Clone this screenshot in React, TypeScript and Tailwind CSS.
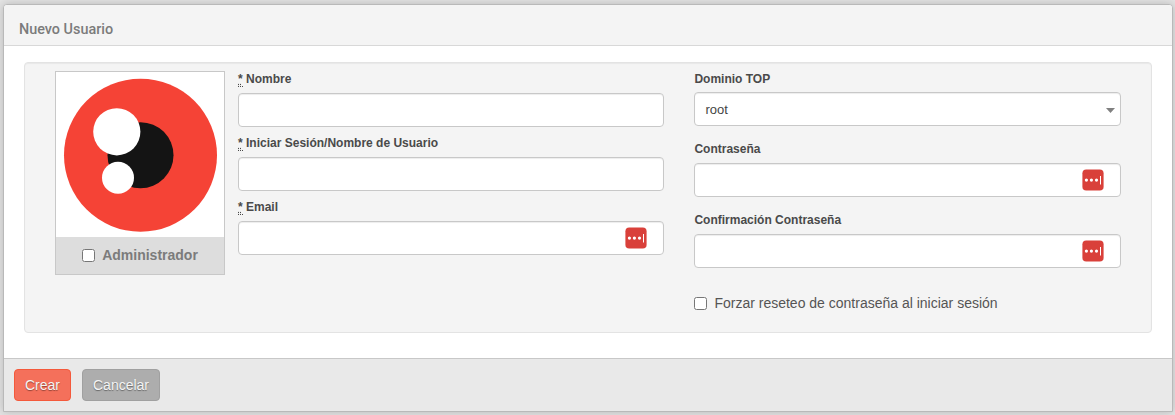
import type { ReactNode } from "react";

const inputClass =
  "block h-[34px] w-full rounded-[4px] border border-[#c8c8c8] bg-white px-2.5 text-[13px] text-[#444] shadow-[inset_0_1px_1px_rgba(0,0,0,0.075)] outline-none";

function PasswordBadge() {
  return (
    <svg className="absolute top-[6px] right-[17px] size-[22px]" viewBox="0 0 22 22" aria-hidden="true">
      <rect x="0.4" y="0.4" width="21.2" height="21.2" rx="3.8" fill="#d9403a" />
      <circle cx="4.4" cy="11.1" r="1.6" fill="#fff" />
      <circle cx="9.4" cy="11.1" r="1.6" fill="#fff" />
      <circle cx="14.5" cy="11.1" r="1.6" fill="#fff" />
      <rect x="18" y="7" width="1" height="8.5" fill="#fff" />
    </svg>
  );
}

function Field({
  label,
  required,
  badge,
  type = "text",
}: {
  label: string;
  required?: boolean;
  badge?: boolean;
  type?: string;
}) {
  return (
    <label className="block">
      <Label required={required}>{label}</Label>
      <span className="relative block">
        <input type={type} className={inputClass} />
        {badge && <PasswordBadge />}
      </span>
    </label>
  );
}

function Label({ required, children }: { required?: boolean; children: ReactNode }) {
  return (
    <span className="block h-[22px] text-[12px] leading-[16px] font-bold text-[#4a4a4a]">
      {required && (
        <>
          <abbr title="required" className="border-b border-dotted border-[#4a4a4a] underline decoration-dotted">*</abbr>{" "}
        </>
      )}
      {children}
    </span>
  );
}

function Checkbox() {
  return <input type="checkbox" className="size-[13px] shrink-0" />;
}

function Avatar() {
  return (
    <div className="h-[204px] w-[170px] shrink-0 border border-[#c8c8c8] bg-white">
      <svg className="block h-[165px] w-[168px]" viewBox="0 0 168 165">
        <circle cx="84.5" cy="83.2" r="76.5" fill="#f54336" />
        <circle cx="84.5" cy="83.2" r="33" fill="#141414" />
        <circle cx="60.8" cy="59.8" r="23.6" fill="#fff" />
        <circle cx="62" cy="105.7" r="16" fill="#fff" />
      </svg>
      <label className="flex h-[37px] items-center justify-center gap-[7px] bg-[#ddd] text-[14px] font-bold text-[#7b7b7b]">
        <Checkbox />
        Administrador
      </label>
    </div>
  );
}

export default function App() {
  return (
    <div className="h-[415px] overflow-hidden bg-[#e4e4e4] pt-1 pl-[3px] font-['Liberation_Sans',Arial,sans-serif]">
      <div className="flex h-[408px] w-[1170px] flex-col overflow-hidden rounded-t-[4px] border border-[#b9b9b9] bg-white shadow-[0_0_10px_rgba(0,0,0,0.2)]">
        <header className="h-[41px] border-b border-[#d8d8d8] bg-[#f4f4f4] px-[15px] pt-[5px]">
          <h1 className="font-['Roboto',sans-serif] text-[14.4px] leading-[40px] font-medium text-[#7b7b7b]">Nuevo Usuario</h1>
        </header>
        <main className="h-[312px] px-5 pt-4">
          <section className="flex h-[271px] rounded-[4px] border border-[#e3e3e3] bg-[#f4f4f4] pt-2 pl-[30px] shadow-[inset_0_1px_1px_rgba(0,0,0,0.05)]">
            <Avatar />
            <div className="ml-[13px] flex w-[426px] flex-col gap-2">
              <Field label="Nombre" required />
              <Field label="Iniciar Sesión/Nombre de Usuario" required />
              <Field label="Email" required badge />
            </div>
            <div className="ml-[30.4px] w-[426.6px]">
              <div className="h-[70px]">
                <Label>Dominio TOP</Label>
                <div className="-mt-px">
                  <button
                    type="button"
                    className="flex h-[34px] w-full items-center justify-between rounded-[4px] border border-[#c8c8c8] bg-white pt-px pr-[5px] pl-2.5 text-[13px] text-[#444] shadow-[inset_0_1px_1px_rgba(0,0,0,0.075)]"
                  >
                    <span className="pt-px">root</span>
                    <svg className="mt-[2px] h-[5px] w-[9px]" viewBox="0 0 9 5">
                      <path d="M0 0h9L4.5 5z" fill="#808080" />
                    </svg>
                  </button>
                </div>
              </div>
              <div className="flex flex-col gap-[15px]">
                <Field label="Contraseña" type="password" badge />
                <Field label="Confirmación Contraseña" type="password" badge />
              </div>
              <label className="mt-[25px] flex h-5 items-center gap-[7px] text-[14px] text-[#555]">
                <Checkbox />
                Forzar reseteo de contraseña al iniciar sesión
              </label>
            </div>
          </section>
        </main>
        <footer className="flex flex-1 gap-[11px] border-t border-[#c8c8c8] bg-[#e9e9e9] pt-[10px] pl-[10px]">
          <button
            type="button"
            className="h-8 w-[57px] rounded-[4px] border border-[#f4593b] bg-[#f4705b] text-[14px] text-[#f4f4f4] [text-shadow:0_1px_1px_rgba(0,0,0,0.4)]"
          >
            Crear
          </button>
          <button
            type="button"
            className="h-8 w-[78px] rounded-[4px] border border-[#a0a0a0] bg-[#adadad] text-[14px] text-[#f4f4f4] [text-shadow:0_1px_1px_rgba(0,0,0,0.4)]"
          >
            Cancelar
          </button>
        </footer>
      </div>
    </div>
  );
}
